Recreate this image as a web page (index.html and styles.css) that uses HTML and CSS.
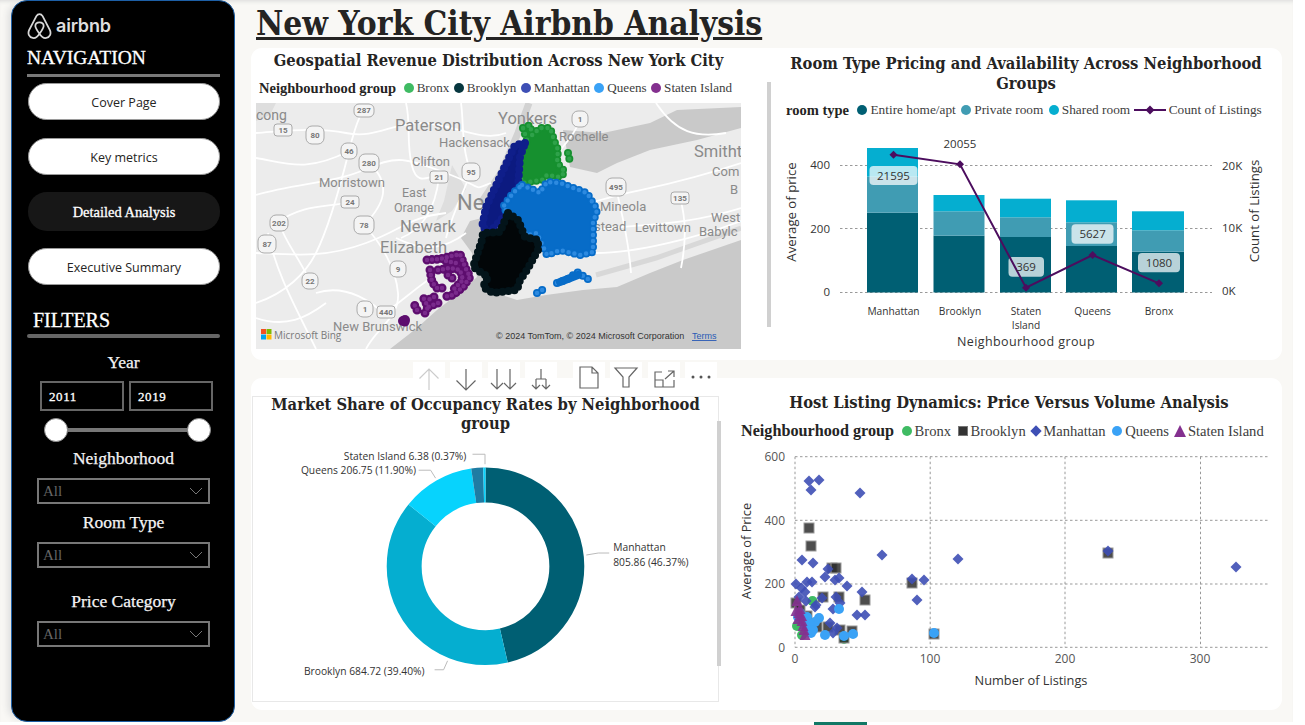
FILE: index.html
```html
<!DOCTYPE html>
<html lang="en">
<head>
<meta charset="utf-8">
<title>New York City Airbnb Analysis</title>
<link rel="stylesheet" href="styles.css">
</head>
<body>
<div class="shell">
  <aside class="sidebar">
    <div class="logo">
      <svg class="belo" viewBox="0 0 24 25"><path d="M12 20C10 23 7.5 24.5 5.5 24C2 23.5 .5 20 2 16.5L9 3C10.5 .5 13.5 .5 15 3L22 16.5C23.5 20 22 23.5 18.5 24C16.5 24.5 14 23 12 20C9.500 16.500 8 14.500 8 12.500C8 10 10 9 12 9C14 9 16 10 16 12.500C16 14.500 14.500 16.500 12 20Z"/></svg>
      <span class="logo-word">airbnb</span>
    </div>
    <div class="side-head nav-head">NAVIGATION</div>
    <div class="rule"></div>
    <button class="nav-btn first">Cover Page</button>
    <button class="nav-btn">Key metrics</button>
    <button class="nav-btn active">Detailed Analysis</button>
    <button class="nav-btn">Executive Summary</button>
    <div class="side-head filter-head">FILTERS</div>
    <div class="rule rule-thick"></div>
    <div class="flabel year-label">Year</div>
    <div class="range">
      <div class="range-box">2011</div>
      <div class="range-box">2019</div>
    </div>
    <div class="slider"><span class="thumb"></span><span class="track"></span><span class="thumb"></span></div>
    <div class="flabel hood-label">Neighborhood</div>
    <div class="dropdown"><span>All</span><svg viewBox="0 0 14 8"><path d="M1 1L7 7L13 1"/></svg></div>
    <div class="flabel room-label">Room Type</div>
    <div class="dropdown"><span>All</span><svg viewBox="0 0 14 8"><path d="M1 1L7 7L13 1"/></svg></div>
    <div class="flabel price-label">Price Category</div>
    <div class="dropdown"><span>All</span><svg viewBox="0 0 14 8"><path d="M1 1L7 7L13 1"/></svg></div>
  </aside>

  <main class="main">
    <h1 class="page-title">New York City Airbnb Analysis</h1>

    <section class="panel panel-top">
      <div class="viz viz-map">
        <h2 class="viz-title">Geospatial Revenue Distribution Across New York City</h2>
        <div class="legend legend-map">
          <b class="legend-name">Neighbourhood group</b>
          <span class="key"><i class="dot c-bronx"></i>Bronx</span>
          <span class="key"><i class="dot c-brooklyn-map"></i>Brooklyn</span>
          <span class="key"><i class="dot c-manh"></i>Manhattan</span>
          <span class="key"><i class="dot c-queens"></i>Queens</span>
          <span class="key"><i class="dot c-staten"></i>Staten Island</span>
        </div>
        <svg class="map" viewBox="0 0 485 246">
          <defs>
            <path id="bx" d="M267 25L274 22L276 32L284 25L294 25L299 40L302 47L301 60L309 69L304 74L291 72L286 77L266 80L262 64L266 47L271 37Z"/>
            <path id="bx2" d="M312 50L313 55L315 60"/>
            <path id="mh" d="M269 40L259 42L244 74L230 104L226 124L234 129L251 110L262 84L264 54Z"/>
            <path id="qn" d="M266 82L284 90L291 79L304 80L317 85L331 90L341 107L337 120L337 149L324 152L304 147L291 152L281 130L271 132L261 119L251 109L247 104L257 90Z"/>
            <path id="qn2" d="M281 190L291 184M301 180L312 176L321 169L332 176"/>
            <path id="bk" d="M252 110L262 117L269 134L282 137L282 147L271 167L264 177L261 187L237 190L227 184L232 174L217 164L226 137L227 130L244 129Z"/>
            <path id="si" d="M171 157L184 156L204 151L209 164L214 174L207 184L197 192L187 194M182 167L194 165L204 167L207 177L197 187M174 167L176 179L181 185L187 185M190 158L200 160M192 172L200 178M182 200L172 204L167 194M178 194L170 198M161 207L157 199M169 210L172 204M149 219L151 216"/>
          </defs>
          <rect width="485" height="246" fill="#ececec"/>
          <path fill="#c9c9c9" d="M134 246L161 225L181 207L207 187L221 174L216 150L205 135L214 118L226 115L240 190L261 197L290 192L327 187L361 184L394 170L427 157L485 137V246Z"/>
          <path fill="#c9c9c9" d="M307 27L347 30L394 20L421 7L485 4V25L441 37L394 47L361 60L341 70L314 64Z"/>
          <path fill="none" stroke="#d2d2d2" stroke-width="7" d="M273 0L262 30L245 70L225 100"/>
          <path fill="none" stroke="#d8d8d8" stroke-width="5" d="M340 172L400 155L485 125"/>
          <path fill="#dedede" d="M0 0H20L14 12L0 18ZM196 62L210 86L196 108L180 118L188 98Z"/>
          <g class="roads">
            <path d="M0 30C30 28 60 24 90 30S135 20 165 20 225 40 250 30"/>
            <path d="M0 92C40 80 80 80 110 66S150 55 190 70 215 88 235 80"/>
            <path d="M0 150C40 152 70 155 110 140S150 115 190 110"/>
            <path d="M0 200C30 190 50 170 60 150S80 100 93 48 110 10 115 0"/>
            <path d="M12 130C20 170 40 205 60 246"/>
            <path d="M108 122C125 140 140 165 142 190S120 225 110 246"/>
            <path d="M183 74C180 100 170 125 145 135"/>
            <path d="M215 69C205 95 195 115 190 135"/>
            <path d="M335 100C370 88 410 85 485 60"/>
            <path d="M335 128C380 120 420 125 485 105"/>
            <path d="M360 84C365 110 372 130 375 170"/>
            <path d="M424 95C430 115 430 140 425 165"/>
            <path d="M340 150C380 150 440 135 485 118"/>
            <path d="M324 16C320 30 310 40 300 52"/>
            <path d="M60 190C90 180 120 200 130 215"/>
            <path d="M0 55C30 60 50 70 93 48"/>
            <path d="M150 0C155 20 150 40 156 63S175 70 183 74"/>
            <path d="M113 60C135 80 130 100 108 122"/>
            <path d="M20 120C50 100 70 105 94 99"/>
            <path d="M54 178C40 150 30 140 23 120"/>
            <path d="M0 215C30 225 50 215 70 200"/>
            <path d="M130 209C150 195 165 180 190 165"/>
            <path d="M140 135C170 150 190 145 210 130"/>
            <path d="M205 0C208 20 205 45 215 69"/>
            <path d="M400 0C420 30 440 35 470 30"/>
          </g>
          <g class="place">
            <text x="0" y="17" class="p14">cong</text>
            <text x="139" y="28" class="p16">Paterson</text>
            <text x="242" y="21" class="p16">Yonkers</text>
            <text x="183" y="44" class="p13">Hackensack</text>
            <text x="303" y="38" class="p13">Rochelle</text>
            <text x="156" y="63" class="p13">Clifton</text>
            <text x="63" y="84" class="p13">Morristown</text>
            <text x="146" y="94" class="p12">East</text>
            <text x="138" y="109" class="p12">Orange</text>
            <text x="201" y="107" class="p22">Ne</text>
            <text x="144" y="129" class="p16">Newark</text>
            <text x="124" y="150" class="p16">Elizabeth</text>
            <text x="77" y="228" class="p13">New Brunswick</text>
            <text x="344" y="108" class="p13">Mineola</text>
            <text x="338" y="128" class="p13">stead</text>
            <text x="379" y="129" class="p13">Levittown</text>
            <text x="438" y="54" class="p16">Smitht</text>
            <text x="456" y="73" class="p13">Com</text>
            <text x="474" y="91" class="p13">B</text>
            <text x="455" y="119" class="p13">West</text>
            <text x="443" y="133" class="p13">Babylc</text>
          </g>
          <g class="shields">
            <g transform="translate(108 7)"><rect x="-10" y="-6" width="20" height="13" rx="5"/><text y="3">287</text></g>
            <g transform="translate(59 32)"><rect x="-9" y="-9" width="18" height="18" rx="6"/><text y="3">80</text></g>
            <g transform="translate(27 27)"><rect x="-9" y="-6" width="18" height="12" rx="3"/><text y="3">15</text></g>
            <g transform="translate(93 48)"><rect x="-8" y="-8" width="16" height="16" rx="6"/><text y="3">46</text></g>
            <g transform="translate(113 60)"><rect x="-10" y="-9" width="20" height="18" rx="6"/><text y="3">280</text></g>
            <g transform="translate(183 74)"><rect x="-9" y="-6" width="18" height="12" rx="3"/><text y="3">21</text></g>
            <g transform="translate(215 69)"><rect x="-9" y="-9" width="18" height="18" rx="6"/><text y="3">95</text></g>
            <g transform="translate(94 99)"><rect x="-9" y="-6" width="18" height="12" rx="3"/><text y="3">24</text></g>
            <g transform="translate(108 122)"><rect x="-10" y="-9" width="20" height="18" rx="6"/><text y="3">78</text></g>
            <g transform="translate(23 120)"><rect x="-9" y="-8" width="18" height="16" rx="6"/><text y="3">202</text></g>
            <g transform="translate(11 141)"><rect x="-9" y="-9" width="18" height="18" rx="6"/><text y="3">87</text></g>
            <g transform="translate(142 166)"><rect x="-8" y="-8" width="16" height="16" rx="6"/><text y="3">9</text></g>
            <g transform="translate(54 178)"><rect x="-8" y="-8" width="16" height="16" rx="6"/><text y="3">22</text></g>
            <g transform="translate(109 206)"><rect x="-8" y="-8" width="16" height="16" rx="6"/><text y="3">1</text></g>
            <g transform="translate(130 209)"><rect x="-9" y="-6" width="18" height="12" rx="3"/><text y="3">440</text></g>
            <g transform="translate(324 16)"><rect x="-8" y="-8" width="16" height="16" rx="6"/><text y="3">1</text></g>
            <g transform="translate(360 84)"><rect x="-10" y="-9" width="20" height="18" rx="6"/><text y="3">495</text></g>
            <g transform="translate(424 95)"><rect x="-9" y="-6" width="18" height="12" rx="3"/><text y="3">135</text></g>
          </g>
          <g class="cluster bronx">
            <use class="fill" href="#bx"/><use class="beads" href="#bx"/><use class="glint" href="#bx"/>
            <use class="beads" href="#bx2"/><use class="glint" href="#bx2"/>
          </g>
          <g class="cluster manh">
            <use class="fill" href="#mh"/><use class="beads" href="#mh"/>
          </g>
          <g class="cluster queens">
            <use class="fill" href="#qn"/><use class="beads" href="#qn"/><use class="glint" href="#qn"/>
            <use class="beads" href="#qn2"/><use class="glint" href="#qn2"/>
            <path class="fat" d="M304 179L322 172"/>
          </g>
          <g class="cluster brook">
            <use class="fill" href="#bk"/><use class="beads" href="#bk"/>
          </g>
          <g class="cluster staten">
            <use class="beads" href="#si"/><use class="glint" href="#si"/>
            <circle cx="147" cy="218" r="5"/><circle cx="149" cy="217" r="5"/>
          </g>
          <g class="bing-logo">
            <rect x="5" y="226" width="5" height="5" fill="#f25022"/>
            <rect x="10.500" y="226" width="5" height="5" fill="#7fba00"/>
            <rect x="5" y="231.500" width="5" height="5" fill="#00a4ef"/>
            <rect x="10.500" y="231.500" width="5" height="5" fill="#ffb900"/>
          </g>
          <text x="18" y="236" class="bing-word">Microsoft Bing</text>
          <text x="240" y="236" class="attrib">© 2024 TomTom, © 2024 Microsoft Corporation</text>
          <text x="436" y="236" class="terms">Terms</text>
        </svg>
      </div>

      <div class="viz viz-bars">
        <span class="scroll-bar"></span>
        <h2 class="viz-title">Room Type Pricing and Availability Across Neighborhood Groups</h2>
        <div class="legend legend-bars">
          <b class="legend-name">room type</b>
          <span class="key"><i class="dot c-entire"></i>Entire home/apt</span>
          <span class="key"><i class="dot c-private"></i>Private room</span>
          <span class="key"><i class="dot c-shared"></i>Shared room</span>
          <span class="key line-key"><svg width="34" height="12" viewBox="0 0 34 12"><path class="count-line" d="M1 6H33"/><path class="count-mark" d="M17 1.500L21.500 6L17 10.500L12.500 6Z"/></svg>Count of Listings</span>
        </div>
        <svg class="bars" viewBox="767 125 515 227">
          <g class="grid">
            <path d="M840 165.500H1212M840 228.500H1212M840 292.500H1212"/>
          </g>
          <g class="bar-a">
            <rect x="867" y="212.700" width="51" height="79.800"/><rect x="933.500" y="235.700" width="51" height="56.800"/><rect x="1000" y="237" width="51" height="55.500"/><rect x="1066" y="246" width="51" height="46.500"/><rect x="1132" y="251.700" width="52" height="40.800"/>
          </g>
          <g class="bar-b">
            <rect x="867" y="176.700" width="51" height="36"/><rect x="933.500" y="211.300" width="51" height="24.400"/><rect x="1000" y="217.300" width="51" height="19.700"/><rect x="1066" y="222.300" width="51" height="23.700"/><rect x="1132" y="230.300" width="52" height="21.400"/>
          </g>
          <g class="bar-c">
            <rect x="867" y="148" width="51" height="28.700"/><rect x="933.500" y="195" width="51" height="16.300"/><rect x="1000" y="198.700" width="51" height="18.600"/><rect x="1066" y="200.300" width="51" height="22"/><rect x="1132" y="211.300" width="52" height="19"/>
          </g>
          <g class="tips">
            <rect x="869.500" y="166" width="48" height="19" rx="4"/>
            <rect x="1008.500" y="257" width="35.500" height="19.700" rx="4"/>
            <rect x="1071.500" y="224.300" width="42" height="19.400" rx="4"/>
            <rect x="1138" y="253" width="42" height="19.300" rx="4"/>
          </g>
          <path class="count-line" d="M893.500 154.700L960 164.300L1026 287.700L1092.600 255L1159 283.300"/>
          <g class="count-mark">
            <path d="M893.500 150.700l4 4l-4 4l-4-4Z"/><path d="M960 160.300l4 4l-4 4l-4-4Z"/><path d="M1026 283.700l4 4l-4 4l-4-4Z"/><path d="M1092.600 251l4 4l-4 4l-4-4Z"/><path d="M1159 279.300l4 4l-4 4l-4-4Z"/>
          </g>
          <g class="chart-txt mid val">
            <text x="893.500" y="180">21595</text>
            <text x="960" y="148">20055</text>
            <text x="1026" y="271">369</text>
            <text x="1092.600" y="238">5627</text>
            <text x="1159" y="267">1080</text>
          </g>
          <g class="chart-txt end val">
            <text x="830" y="169">400</text><text x="830" y="233">200</text><text x="830" y="296">0</text>
          </g>
          <g class="chart-txt val">
            <text x="1222" y="170">20K</text><text x="1222" y="232">10K</text><text x="1222" y="295">0K</text>
          </g>
          <g class="chart-txt mid small">
            <text x="893.500" y="315">Manhattan</text>
            <text x="960" y="315">Brooklyn</text>
            <text x="1026" y="315">Staten</text>
            <text x="1026" y="329">Island</text>
            <text x="1092.600" y="315">Queens</text>
            <text x="1159" y="315">Bronx</text>
          </g>
          <text x="1026" y="346" class="axis-title wide">Neighbourhood group</text>
          <text transform="translate(796 212) rotate(-90)" class="axis-title big">Average of price</text>
          <text transform="translate(1259 211) rotate(-90)" class="axis-title big">Count of Listings</text>
        </svg>
      </div>
    </section>

    <div class="visual-head">
      <span class="tile"><svg viewBox="0 0 32 30" class="ico-off"><path d="M16 28V7M6.500 16.500L16 7L25.500 16.500"/></svg></span>
      <span class="tile"><svg viewBox="0 0 32 30"><path d="M16 7V28M6.500 18.500L16 28L25.500 18.500"/></svg></span>
      <span class="tile"><svg viewBox="0 0 32 30"><path d="M9 7V27M3 21L9 27L15 21M22 7V27M16 21L22 27L28 21"/></svg></span>
      <span class="tile"><svg viewBox="0 0 32 30"><path d="M16 7V17M11 17H21M11 17V27M21 17V27M7 23L11 27L15 23M17 23L21 27L25 23"/></svg></span>
      <span class="tile tile-gap"><svg viewBox="0 0 32 30"><path d="M7 5H19L25 11V26H7ZM19 5V11H25"/></svg></span>
      <span class="tile"><svg viewBox="0 0 32 30"><path d="M5 6H27L19 15V25H13V15Z"/></svg></span>
      <span class="tile"><svg viewBox="0 0 32 30"><path d="M14 10H7V25H26V18M7 18H15V25M17 17L26 9M20 9H26V15"/></svg></span>
      <span class="tile"><svg viewBox="0 0 32 30" class="ico-fill"><circle cx="8" cy="15" r="1.500"/><circle cx="16" cy="15" r="1.500"/><circle cx="24" cy="15" r="1.500"/></svg></span>
    </div>

    <section class="panel panel-bottom">
      <div class="viz viz-donut">
        <span class="scroll-bar donut-bar"></span>
        <h2 class="viz-title">Market Share of Occupancy Rates by Neighborhood group</h2>
        <svg class="donut" viewBox="252 432 466 268">
          <g transform="rotate(-90 485 567.300)" fill="none" stroke-width="35">
            <circle cx="485" cy="567.300" r="81.500" pathLength="100" stroke="#005f73" stroke-dasharray="46.37 53.63"/>
            <circle cx="485" cy="567.300" r="81.500" pathLength="100" stroke="#05aed0" stroke-dasharray="39.4 60.6" stroke-dashoffset="-46.37"/>
            <circle cx="485" cy="567.300" r="81.500" pathLength="100" stroke="#07d3fd" stroke-dasharray="11.9 88.1" stroke-dashoffset="-85.77"/>
            <circle cx="485" cy="567.300" r="81.500" pathLength="100" stroke="#1f7ca3" stroke-dasharray="1.96 98.04" stroke-dashoffset="-97.67"/>
            <circle cx="485" cy="567.300" r="81.500" pathLength="100" stroke="#07d3fd" stroke-dasharray="0.37 99.63" stroke-dashoffset="-99.63"/>
          </g>
          <path class="leader" d="M472 455H484.500V465M418 471H430L435 479M609 554H598L586 556M434 671H443L447 662"/>
          <g class="chart-txt small2">
            <text x="343" y="461">Staten Island 6.38 (0.37%)</text>
            <text x="300" y="475">Queens 206.75 (11.90%)</text>
            <text x="613" y="552">Manhattan</text>
            <text x="613" y="567">805.86 (46.37%)</text>
            <text x="303" y="676">Brooklyn 684.72 (39.40%)</text>
          </g>
        </svg>
      </div>
      <div class="viz viz-scatter">
        <h2 class="viz-title">Host Listing Dynamics: Price Versus Volume Analysis</h2>
        <div class="legend legend-scatter">
          <b class="legend-name">Neighbourhood group</b>
          <span class="key"><i class="dot c-bronx"></i>Bronx</span>
          <span class="key"><i class="square"></i>Brooklyn</span>
          <span class="key"><i class="diamond"></i>Manhattan</span>
          <span class="key"><i class="dot c-queens"></i>Queens</span>
          <span class="key"><i class="tri"></i>Staten Island</span>
        </div>
        <svg class="scatter" viewBox="722 445 560 255">
          <defs>
            <path id="d" d="M0 -5.500L5.500 0L0 5.500L-5.500 0Z"/>
            <rect id="s" x="-5" y="-5" width="10" height="10"/>
            <circle id="c" r="5"/>
            <path id="t" d="M0 -7L5.500 4H-5.500Z"/>
          </defs>
          <path class="grid" d="M795 456.700H1268M795 520.300H1268M795 584H1268M795 647.300H1268M795 456.700V647.300M930.200 456.700V647.300M1065 456.700V647.300M1200.500 456.700V647.300"/>
          <g class="m-green">
            <use href="#c" x="812.500" y="601"/><use href="#c" x="802" y="635"/><use href="#c" x="797" y="626"/><use href="#c" x="844" y="639"/>
          </g>
          <g class="m-square">
            <use href="#s" x="809" y="528"/><use href="#s" x="811" y="546"/><use href="#s" x="832" y="568"/><use href="#s" x="836" y="568"/><use href="#s" x="912" y="583"/><use href="#s" x="1108" y="553"/><use href="#s" x="823" y="597"/><use href="#s" x="839" y="597"/><use href="#s" x="865" y="600"/><use href="#s" x="796" y="603"/><use href="#s" x="807" y="616"/><use href="#s" x="817" y="627"/><use href="#s" x="828" y="627"/><use href="#s" x="840" y="630"/><use href="#s" x="852" y="631"/><use href="#s" x="844" y="638"/><use href="#s" x="934" y="634"/><use href="#s" x="800" y="610"/>
          </g>
          <g class="m-diamond">
            <use href="#d" x="809" y="481"/><use href="#d" x="819" y="480"/><use href="#d" x="811" y="490"/><use href="#d" x="860" y="493"/><use href="#d" x="882" y="555"/><use href="#d" x="958" y="559"/><use href="#d" x="1108" y="551"/><use href="#d" x="1236" y="567"/><use href="#d" x="802" y="560"/><use href="#d" x="813" y="563"/><use href="#d" x="828" y="569"/><use href="#d" x="825" y="577"/><use href="#d" x="835" y="580"/><use href="#d" x="839" y="578"/><use href="#d" x="807" y="582"/><use href="#d" x="812" y="582"/><use href="#d" x="796" y="584"/><use href="#d" x="801.500" y="588"/><use href="#d" x="805" y="592"/><use href="#d" x="799" y="597"/><use href="#d" x="806" y="601"/><use href="#d" x="822" y="598"/><use href="#d" x="816" y="605"/><use href="#d" x="815" y="607"/><use href="#d" x="836" y="597"/><use href="#d" x="840" y="603"/><use href="#d" x="847" y="586"/><use href="#d" x="862" y="592"/><use href="#d" x="912" y="579"/><use href="#d" x="924" y="580"/><use href="#d" x="917" y="600"/><use href="#d" x="857" y="615"/><use href="#d" x="865" y="615"/><use href="#d" x="833" y="609"/><use href="#d" x="830" y="623"/><use href="#d" x="837" y="628"/><use href="#d" x="833" y="633"/>
          </g>
          <g class="m-blue">
            <use href="#c" x="839" y="609"/><use href="#c" x="819" y="618"/><use href="#c" x="815" y="622"/><use href="#c" x="807" y="617"/><use href="#c" x="800" y="613"/><use href="#c" x="811" y="633"/><use href="#c" x="825" y="635"/><use href="#c" x="844" y="636"/><use href="#c" x="853" y="634"/><use href="#c" x="934" y="633"/><use href="#c" x="809" y="628"/><use href="#c" x="805" y="625"/><use href="#c" x="798" y="617"/><use href="#c" x="803" y="620"/><use href="#c" x="810" y="624"/><use href="#c" x="813" y="630"/>
          </g>
          <g class="m-purple">
            <use href="#t" x="797" y="602"/><use href="#t" x="800" y="610"/><use href="#t" x="801.500" y="617"/><use href="#t" x="798" y="620"/><use href="#t" x="803" y="627"/><use href="#t" x="805" y="636"/><use href="#t" x="799" y="614"/><use href="#t" x="796" y="612"/><use href="#t" x="802" y="622"/><use href="#t" x="804" y="631"/>
          </g>
          <g class="chart-txt end light">
            <text x="785" y="461">600</text><text x="785" y="525">400</text><text x="785" y="588">200</text><text x="785" y="652">0</text>
          </g>
          <g class="chart-txt mid light">
            <text x="795" y="663">0</text><text x="930" y="663">100</text><text x="1065" y="663">200</text><text x="1200" y="663">300</text>
          </g>
          <text x="1031" y="685" class="axis-title title-n">Number of Listings</text>
          <text transform="translate(751 551) rotate(-90)" class="axis-title title-n">Average of Price</text>
        </svg>
      </div>
    </section>
  </main>
</div>
<footer class="tabs"><span class="tab-mark"></span></footer>
</body>
</html>
```

FILE: styles.css
```css
* { box-sizing: border-box; }
html, body { margin: 0; padding: 0; height: 725px; overflow: hidden; background: #fff; }
body { font-family: "Liberation Serif", serif; color: #252423; }

.shell {
  display: flex;
  height: 722px;
  width: 1293px;
  margin-left: 0;
  padding-left: 11px;
  background: #f9f8f5;
  box-shadow: inset 0 4px 4px -3px #d8d8d8;
}

/* Sidebar */
.sidebar {
  flex: 0 0 224px;
  height: 722px;
  padding: 12px 0 0 15px;
  background: #000;
  border: 1px solid #1d5fa6;
  border-radius: 16px;
  color: #fff;
  box-shadow: -6px 0 7px -3px #ddd;
}
.logo { display: flex; align-items: center; height: 26px; gap: 4px; }
.belo { width: 25px; height: 26px; fill: none; stroke: #d8d8d8; stroke-width: 1.700; }
.logo-word { font: 600 18px/26px Inter, sans-serif; color: #dedede; letter-spacing: -.2px; }
.side-head { font-size: 20px; line-height: 20px; -webkit-text-stroke: .3px #fff; }
.nav-head { margin-top: 9px; font-size: 19.500px; }
.filter-head { margin-top: 25px; padding-left: 6px; }
.rule { width: 193px; height: 3px; margin-top: 6px; background: #787878; }
.rule-thick { height: 4px; margin-top: 4px; background: #666; border-radius: 2px; }
.nav-btn {
  display: block;
  width: 192px;
  height: 37px;
  margin: 18px 0 0 1px;
  padding: 3px 0 0;
  border: 1px solid #9a9a9a;
  border-radius: 19px;
  background: #fff;
  font: 12.500px/1 "Open Sans", sans-serif;
  color: #252423;
}
.nav-btn.first { margin-top: 6px; }
.nav-btn.active {
  height: 39px;
  margin-top: 17px;
  padding-top: 2px;
  border: 0;
  background: #171717;
  color: #fff;
  font: 400 14.500px/1 "Liberation Serif", serif;
  -webkit-text-stroke: .3px #fff;
}
.nav-btn.active + .nav-btn { margin-top: 17px; }
.flabel {
  width: 193px;
  height: 20px;
  text-align: center;
  font-size: 17.500px;
  line-height: 20px;
  color: #f4f4f4;
  -webkit-text-stroke: .25px #f4f4f4;
}
.year-label { margin-top: 14px; }
.hood-label { margin-top: 6px; }
.room-label { margin-top: 8px; }
.price-label { margin-top: 23px; }
.range { display: flex; gap: 5px; margin: 9px 0 0 13px; }
.range-box {
  width: 84px;
  height: 30px;
  padding: 1px 0 0 7px;
  border: 2px solid #666;
  font: 400 13px/26px "Liberation Serif", serif;
  letter-spacing: .6px;
  -webkit-text-stroke: .3px #fff;
}
.slider { display: flex; align-items: center; width: 167px; height: 24px; margin: 7px 0 0 17px; }
.thumb { flex: 0 0 24px; height: 24px; border: 1px solid #8a8a8a; border-radius: 50%; background: #fff; }
.track { flex: 1; height: 4px; background: #777; }
.dropdown {
  display: flex;
  align-items: center;
  justify-content: space-between;
  width: 173px;
  height: 26px;
  margin: 10px 0 0 10px;
  padding: 0 5px 0 4px;
  border: 2px solid #777;
  font-size: 15px;
  color: #666;
}
.dropdown svg { width: 14px; height: 8px; fill: none; stroke: #777; stroke-width: 1; }

/* Main */
.main { position: relative; flex: 0 0 1031px; margin-left: 16px; }
.page-title {
  margin: 0;
  height: 48px;
  padding: 6px 0 0 5px;
  font: 700 33.200px/36px "DejaVu Serif Condensed", "DejaVu Serif", serif;
  text-decoration: underline;
  color: #252423;
}
.panel { display: flex; background: #fff; border-radius: 11px; }
.panel-top { height: 312px; }
.panel-bottom { height: 332px; margin-top: 18px; }
.viz { position: relative; }
.viz-title { margin: 0; text-align: center; font: 700 16.400px/20px "DejaVu Serif Condensed", "DejaVu Serif", serif; color: #252423; }

.legend { display: flex; align-items: center; height: 20px; font-size: 13.300px; white-space: nowrap; color: #404040; }
.legend-name { color: #252423; font-size: 14.200px; }
.key { display: inline-flex; align-items: center; gap: 3px; }
.dot { display: inline-block; width: 10px; height: 10px; border-radius: 50%; }
.c-bronx { background: #3fbb63; }
.c-brooklyn-map { background: #07373f; }
.c-manh { background: #3e4fb5; }
.c-queens { background: #3aa2f6; }
.c-staten { background: #84308f; }
.c-entire { background: #005f73; }
.c-private { background: #409cb3; }
.c-shared { background: #05aed0; }
.square { display: inline-block; width: 10px; height: 10px; background: #333; border: 1px solid #777; }
.diamond { display: inline-block; width: 8px; height: 8px; background: #3e4fb5; transform: rotate(45deg); }
.tri { display: inline-block; margin: 0 -1px 0 -1.500px; border: 6.500px solid transparent; border-top: 0; border-bottom: 12px solid #84308f; }

.viz-map { flex: 0 0 495px; padding-top: 3px; }
.legend-map { margin: 7px 0 0 8px; gap: 4.500px; font-size: 13.100px; }
.legend-map .legend-name { margin-right: 3px; font-size: 14.500px; }
.map { display: block; width: 485px; height: 246px; margin: 5px 0 0 5px; }
.roads path { fill: none; stroke: #fff; stroke-width: 1.800; }
.place text { font-family: Roboto, sans-serif; fill: #8a8a8a; }
.place .p12 { font-size: 12.500px; }
.place .p13 { font-size: 13px; }
.place .p14 { font-size: 14px; }
.place .p16 { font-size: 16.500px; }
.place .p22 { font-size: 22px; }
.shields rect { fill: #f4f4f4; stroke: #aaa; stroke-width: 1; }
.shields text { font: 700 8px Roboto, sans-serif; fill: #777; text-anchor: middle; }
.cluster .fill { stroke: none; }
.cluster .beads { fill: none; stroke-width: 8; stroke-dasharray: 0 6; stroke-linecap: round; stroke-linejoin: round; }
.cluster .glint { fill: none; stroke-width: 4.500; stroke-dasharray: 0 6; stroke-linecap: round; stroke-linejoin: round; }
.cluster .fat { fill: none; stroke-width: 8; stroke-linecap: round; }
.bronx .fill { fill: #16902f; } .bronx .beads { stroke: #16902f; } .bronx .glint { stroke: #2fa24a; }
.manh .fill { fill: #0c1a80; } .manh .beads { stroke: #0f1e8a; }
.queens .fill { fill: #076cc8; } .queens .beads, .queens .fat { stroke: #076cc8; } .queens .glint { stroke: #2d8ae0; }
.brook .fill { fill: #020608; } .brook .beads { stroke: #03141a; }
.staten .beads { stroke: #5d0d6e; stroke-width: 9; stroke-dasharray: 0 5; } .staten .glint { stroke: #7a2a8c; stroke-dasharray: 0 5; }
.staten circle { fill: #5d0d6e; }
.bing-word { font: 10px "Open Sans", sans-serif; fill: #7a7a7a; }
.attrib { font: 9px "Liberation Sans", sans-serif; fill: #333; }
.terms { font: 9px "Liberation Sans", sans-serif; fill: #2a5ab5; text-decoration: underline; }

.viz-bars { flex: 1; margin-left: 21px; padding-top: 6px; }
.viz-bars .viz-title { padding-left: 3px; }
.scroll-bar { position: absolute; left: 0; top: 34px; width: 4px; height: 245px; background: #d0d0d0; }
.legend-bars { margin: 6px 0 0 19px; gap: 5.500px; }
.legend-bars .legend-name { margin-right: 3px; font-size: 14.500px; }
.line-key { gap: 2px; margin-left: -3px; }
.bars { display: block; width: 515px; height: 227px; margin-top: 5px; }
.grid { fill: none; stroke: #999; stroke-width: 1; stroke-dasharray: 2.500 2.500; }
.bar-a rect { fill: #005f73; }
.bar-b rect { fill: #409cb3; }
.bar-c rect { fill: #05aed0; }
.tips rect { fill: #fff; fill-opacity: .72; }
.count-line { fill: none; stroke: #4c0d5e; stroke-width: 2; }
.count-mark { fill: #4c0d5e; }
.chart-txt text { font: 12px "Open Sans", sans-serif; fill: #333; }
.mid text { text-anchor: middle; }
.end text { text-anchor: end; }
.val text { font-size: 11.500px; }
.small text { font-size: 10.200px; }
.small2 text { font-size: 10.300px; }
.light text { fill: #555; }
.axis-title { font: 12px "Open Sans", sans-serif; fill: #333; text-anchor: middle; }
.axis-title.wide { font-size: 12.500px; letter-spacing: .4px; }
.axis-title.big { font-size: 13.200px; }
.axis-title.title-n { font-size: 12.800px; }

.visual-head {
  position: absolute;
  left: 162px;
  top: 362px;
  display: flex;
  gap: 5.300px;
}
.tile { display: block; width: 32px; height: 30px; background: #fff; }
.tile-gap { margin-left: 11px; }
.tile svg { display: block; width: 32px; height: 30px; fill: none; stroke: #666; stroke-width: 1.200; }
.tile .ico-off { stroke: #ccc; }
.tile .ico-fill { fill: #555; stroke: none; }

.viz-donut { flex: 0 0 467px; height: 306px; margin: 18px 0 0 1px; border: 1px solid #e8e8e8; }
.viz-donut .viz-title { margin-top: -2px; line-height: 19px; }
.donut-bar { left: 464px; top: 24px; height: 245px; }
.donut { display: block; width: 465px; height: 268px; margin-top: -2px; }
.leader { fill: none; stroke: #bbb; stroke-width: 1; }

.viz-scatter { flex: 1; margin-left: 3px; padding-top: 15px; }
.viz-scatter .viz-title { padding-left: 14px; }
.legend-scatter { margin: 8px 0 0 19px; gap: 6.500px; font-size: 14.600px; }
.legend-scatter .legend-name { font-size: 16.200px; margin-right: 1px; }
.scatter { display: block; width: 560px; height: 255px; margin-top: 4px; }
.m-green { fill: #3fbb63; }
.m-square { fill: #2e2e2e; fill-opacity: .85; stroke: #9a9a9a; stroke-width: 1; }
.m-diamond { fill: #3e4fb5; fill-opacity: .9; }
.m-blue { fill: #3aa2f6; }
.m-purple { fill: #84308f; fill-opacity: .9; }

.tabs { position: relative; height: 3px; background: #fff; }
.tab-mark { position: absolute; left: 814px; top: 0; width: 53px; height: 3px; background: #117865; }
```
